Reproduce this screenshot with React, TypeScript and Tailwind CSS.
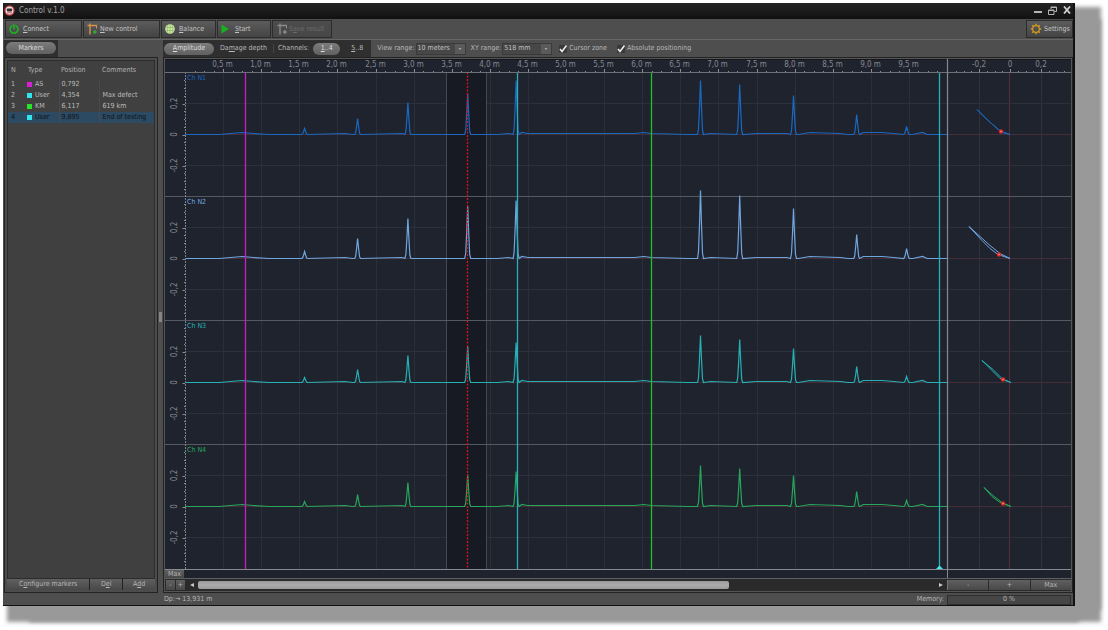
import { useLayoutEffect, useRef, useState } from 'react';
import type { ReactNode } from 'react';

const RULER = 13;
const AXIS = 20;
const XY_WIDTH = 124;
const UNIT = 155; // pixels per 1.0 of amplitude

const peakPositions = [1.57, 2.265, 2.925, 3.71, 4.345, 6.765, 7.28, 7.985, 8.815, 9.47];

const channels = [
  {
    name: 'Ch N1',
    color: '#1a68c0',
    peaks: [6, 16, 32, 41, 54, 54, 50, 39, 20, 8],
    loop: [[-33, 25], [-24, 16], [-12, 5], [-5, 2], [0, 0], [-8, 2], [-22, 14]],
    dot: [-9, 3],
  },
  {
    name: 'Ch N2',
    color: '#6fa6e0',
    peaks: [7, 20, 40, 52, 58, 68, 63, 50, 24, 10],
    loop: [[-41, 32], [-28, 18], [-20, 10], [-12, 4], [0, 0], [-10, 5], [-20, 13]],
    dot: [-11, 4],
  },
  {
    name: 'Ch N3',
    color: '#27b0b4',
    peaks: [5, 13, 27, 36, 40, 47, 43, 34, 16, 6],
    loop: [[-28, 22], [-18, 12], [-10, 4], [-5, 2], [1, 0], [-8, 4], [-17, 13]],
    dot: [-7, 3],
  },
  {
    name: 'Ch N4',
    color: '#27a65c',
    peaks: [5, 12, 24, 32, 35, 41, 38, 31, 15, 6],
    loop: [[-26, 19], [-18, 10], [-10, 4], [-5, 2], [1, 0], [-8, 4], [-17, 11]],
    dot: [-7, 3],
  },
];

const baseline = [
  [0, 0], [0.45, 0], [0.6, 1], [0.75, 2], [0.9, 1], [1.1, 0], [1.5, 0], [2.1, 1], [2.2, 0], [2.85, 1],
  [3, 0], [4.1, 0], [4.25, 1], [4.42, 2], [4.5, 1], [5.9, 1], [6.02, 2], [6.12, 1], [6.6, 0], [6.9, 1],
  [7.5, 1], [7.9, 1], [8.05, 0], [8.2, 2], [8.6, 1], [8.7, 0], [8.9, 2], [9.15, 2], [9.3, 1], [9.55, 0],
  [9.68, 2], [9.74, 0], [10, 0],
];

const markers = [
  { n: 1, type: 'AS', pos: 0.792, label: '0,792', comment: '', color: '#d41fd4', line: '#cc1cd2' },
  { n: 2, type: 'User', pos: 4.354, label: '4,354', comment: 'Max defect', color: '#2fe6ee', line: '#28b0b8' },
  { n: 3, type: 'KM', pos: 6.117, label: '6,117', comment: '619 km', color: '#27e627', line: '#20c026' },
  { n: 4, type: 'User', pos: 9.895, label: '9,895', comment: 'End of testing', color: '#2fe6ee', line: '#28b0b8' },
];

function tracePoints(peaks: number[], width: number, x0: number, y0: number) {
  const pts = baseline
    .filter(([m]) => !peakPositions.some((p) => Math.abs(p - m) < 0.05))
    .map(([m, h]) => [(m / 10) * width, h]);
  peakPositions.forEach((m, i) => {
    const x = (m / 10) * width;
    const h = peaks[i];
    pts.push([x - 3, 0], [x - 2, h * 0.1], [x - 1, h * 0.5], [x, h], [x + 1, h * 0.5], [x + 2, h * 0.08], [x + 3, 0]);
  });
  pts.sort((a, b) => a[0] - b[0]);
  return pts.map(([x, h]) => `${(x0 + x).toFixed(1)},${(y0 - h).toFixed(1)}`).join(' ');
}

function Chart() {
  const ref = useRef<HTMLDivElement>(null);
  const [size, setSize] = useState({ w: 906, h: 511 });

  useLayoutEffect(() => {
    const el = ref.current;
    if (!el) return;
    const update = () => setSize({ w: el.clientWidth, h: el.clientHeight });
    update();
    const observer = new ResizeObserver(update);
    observer.observe(el);
    return () => observer.disconnect();
  }, []);

  const { w, h } = size;
  const right = w - XY_WIDTH;
  const plotW = right - AXIS;
  const bottom = h - 0.5;
  const chH = (h - RULER - 1) / 4;
  const zeroXY = right + 63;
  const mx = (m: number) => Math.round(AXIS + (m / 10) * plotW) + 0.5;
  const top = (i: number) => Math.floor(RULER + i * chH) + 0.5;

  return (
    <div ref={ref} className="relative min-h-0 flex-1 overflow-hidden">
      <svg width={w} height={h} className="absolute inset-0 block bg-[#1f232e]" role="img" aria-label="Amplitude">
        {/* grid */}
        {Array.from({ length: 19 }, (_, i) => (i + 1) / 2).map((m) => (
          <line key={m} x1={mx(m)} x2={mx(m)} y1={RULER} y2={bottom} stroke="#2b2f3a" />
        ))}
        {[-62, -31, 31, 62].map((d) => (
          <line key={d} x1={zeroXY + d + 0.5} x2={zeroXY + d + 0.5} y1={RULER} y2={bottom} stroke={Math.abs(d) === 31 ? '#2f323c' : '#232732'} />
        ))}
        <line x1={zeroXY - 0.5} x2={zeroXY - 0.5} y1={RULER} y2={bottom} stroke="#4c303c" strokeWidth="1.2" />

        {channels.map((c, i) => {
          const zero = Math.round(top(i) + chH / 2) - 0.5;
          return (
            <g key={c.name}>
              {[0.2, -0.2].map((v) => (
                <line key={v} x1={AXIS} x2={w} y1={zero - v * UNIT} y2={zero - v * UNIT} stroke="#2c303b" />
              ))}
              <line x1={AXIS} x2={w} y1={zero} y2={zero} stroke="#452e38" />
            </g>
          );
        })}

        {/* cursor zone */}
        <rect x={mx(3.43)} y={RULER} width={mx(3.945) - mx(3.43)} height={h - RULER} fill="#171a22" />
        <line x1={mx(3.43)} x2={mx(3.43)} y1={RULER} y2={bottom} stroke="#464952" />
        <line x1={mx(3.945)} x2={mx(3.945)} y1={RULER} y2={bottom} stroke="#464952" />

        {channels.map((c, i) => {
          const y = top(i);
          const zero = Math.round(y + chH / 2) - 0.5;
          return (
            <g key={c.name}>
              <line x1={0} x2={w} y1={y} y2={y} stroke="#555962" />
              {Array.from({ length: 15 }, (_, k) => (k - 7) * 7.75).map((d) => (
                <line key={d} x1={d % 31 === 0 ? AXIS - 2.5 : AXIS - 1} x2={AXIS} y1={Math.round(zero + d) + 0.5} y2={Math.round(zero + d) + 0.5} stroke="#8a8d93" />
              ))}
              {[['0,2', -31], ['0', 0], ['-0,2', 31]].map(([t, d]) => (
                <text
                  key={t}
                  textAnchor="middle"
                  transform={`translate(12 ${zero + Number(d)}) rotate(-90)`}
                  fill="#85888f"
                  className="text-[8px]"
                >
                  {t}
                </text>
              ))}
              <text x={AXIS + 2} y={y + 7} fill={c.color} className="text-[7px]">{c.name}</text>
              <polyline points={tracePoints(c.peaks, plotW, AXIS, zero)} fill="none" stroke={c.color} strokeWidth="1.2" />
              <polygon
                points={c.loop.map(([x, v]) => `${zeroXY + x},${zero - v}`).join(' ')}
                fill="none"
                stroke={c.color}
                strokeWidth="1"
              />
              <circle cx={zeroXY + c.dot[0]} cy={zero - c.dot[1]} r="2.2" fill="#e02424" />
              <circle cx={zeroXY + c.dot[0]} cy={zero - c.dot[1]} r="0.8" fill="#ff9a8a" />
            </g>
          );
        })}

        <line x1={AXIS + 0.5} x2={AXIS + 0.5} y1={RULER} y2={bottom} stroke="#7c7f86" strokeDasharray="2 1" />
        <line x1={mx(3.695)} x2={mx(3.695)} y1={RULER} y2={bottom} stroke="#d8161e" strokeWidth="1.3" strokeDasharray="2 1.5" />
        {markers.map((m) => (
          <line key={m.n} x1={mx(m.pos)} x2={mx(m.pos)} y1={RULER} y2={bottom} stroke={m.line} strokeWidth="1.3" />
        ))}
        <path d={`M${mx(9.895) - 4} ${bottom} l2 -2 l2 -2 l2 2 l2 2 z`} fill="#3fe6f0" />

        {/* ruler */}
        <line x1={0} x2={w} y1={0.5} y2={0.5} stroke="#15171d" />
        {Array.from({ length: 79 }, (_, k) => (k + 1) / 8).map((m) => (
          <line key={m} x1={mx(m)} x2={mx(m)} y1={m % 0.5 === 0 ? RULER - 3 : RULER - 1} y2={RULER} stroke="#8a8d93" />
        ))}
        {Array.from({ length: 19 }, (_, i) => (i + 1) / 2).map((m) => (
          <text key={m} x={mx(m) - 1} y={8} textAnchor="middle" fill="#85888f" className="text-[8px]">
            {m.toFixed(1).replace('.', ',')} m
          </text>
        ))}
        {Array.from({ length: 15 }, (_, k) => k - 7).map((k) => (
          <line key={k} x1={Math.round(zeroXY + k * 7.75) + 0.5} x2={Math.round(zeroXY + k * 7.75) + 0.5} y1={k % 4 === 0 ? RULER - 3 : RULER - 1} y2={RULER} stroke="#8a8d93" />
        ))}
        {[['-0,2', -31], ['0', 0], ['0,2', 31]].map(([t, d]) => (
          <text key={t} x={zeroXY + Number(d)} y={8} textAnchor="middle" fill="#85888f" className="text-[8px]">{t}</text>
        ))}
        <line x1={0} x2={w} y1={RULER + 0.5} y2={RULER + 0.5} stroke="#6c6f76" />
        <line x1={0} x2={w} y1={bottom} y2={bottom} stroke="#85888f" strokeWidth="1.2" />
        <line x1={right + 0.5} x2={right + 0.5} y1={0} y2={h} stroke="#85888f" strokeWidth="1.2" />
      </svg>
    </div>
  );
}

const AppIcon = () => (
  <svg viewBox="0 0 11 11" className="size-[11px]">
    <circle cx="5.5" cy="5.5" r="5.2" fill="#b9383f" />
    <circle cx="5.5" cy="5.5" r="3.9" fill="#e9e3e3" />
    <rect x="2.8" y="3.4" width="5.4" height="3" rx="0.8" fill="#3c2b2e" />
    <path d="M3 7.8h5" stroke="#c4555b" />
  </svg>
);

const PowerIcon = () => (
  <svg viewBox="0 0 10 10" className="size-[10px]" fill="none" stroke="#19b81e" strokeWidth="1.5" strokeLinecap="round">
    <path d="M3 1.8a4 4 0 1 0 4 0M5 0.8v4" />
  </svg>
);

const ControlIcon = ({ color, plus }: { color: string; plus: string }) => (
  <svg viewBox="0 0 11 12" className="h-3 w-[11px]" fill="none" stroke={color} strokeWidth="1.4">
    <path d="M0.5 2.5h9.5M3 0.5v11" />
    <path d="M9.5 2.5v3" strokeWidth="1" />
    <path d="M5.8 9h4M7.8 7v4" stroke={plus} />
  </svg>
);

const GlobeIcon = () => (
  <svg viewBox="0 0 10 10" className="size-[10px]">
    <circle cx="5" cy="5" r="4.8" fill="#cdeaa6" />
    <path d="M1 3.5h8M1 6.5h8M5 0.5v9M3 1c-1 2.5-1 5.5 0 8M7 1c1 2.5 1 5.5 0 8" fill="none" stroke="#86ad62" strokeWidth="0.6" />
  </svg>
);

const PlayIcon = () => (
  <svg viewBox="0 0 8 10" className="h-[10px] w-2">
    <path d="M0.5 0.5L7.8 5L0.5 9.5z" fill="#16b41c" />
  </svg>
);

const GearIcon = () => (
  <svg viewBox="0 0 12 12" className="size-3" fill="none" stroke="#d39a1c">
    <circle cx="6" cy="6" r="3.3" strokeWidth="1.2" />
    <path d="M6 0.8v2M6 9.2v2M0.8 6h2M9.2 6h2M2.3 2.3l1.4 1.4M8.3 8.3l1.4 1.4M9.7 2.3l-1.4 1.4M3.7 8.3l-1.4 1.4" strokeWidth="1.5" />
  </svg>
);

function ToolButton({ icon, children, className, disabled }: { icon: ReactNode; children: ReactNode; className: string; disabled?: boolean }) {
  return (
    <button
      type="button"
      disabled={disabled}
      className={`flex h-[18px] items-center border border-[#2c2c2c] bg-linear-to-b from-[#5c5c5c] to-[#444444] text-[#c4c4c4] disabled:from-[#4c4c4c] disabled:to-[#474747] disabled:text-[#6c6c6c] ${className}`}
    >
      {icon}
      <span className="pt-px">{children}</span>
    </button>
  );
}

function SmallButton({ children, className }: { children: ReactNode; className: string }) {
  return (
    <button type="button" className={`flex items-center justify-center bg-linear-to-b from-[#606060] to-[#484848] text-[#b4b4b4] ${className}`}>
      {children}
    </button>
  );
}

function RangeSelect({ id, label, options }: { id: string; label: string; options: string[] }) {
  return (
    <div className="flex items-center">
      <label htmlFor={id}>{label}</label>
      <div className="relative ml-px flex h-3 w-[50px] border border-[#3a3a3a] bg-[#474747]">
        <select id={id} className="w-full appearance-none bg-transparent pl-px text-[#c0c0c0] outline-none">
          {options.map((o) => (
            <option key={o}>{o}</option>
          ))}
        </select>
        <span className="pointer-events-none absolute inset-y-0 right-0 flex w-[10px] items-center justify-center bg-[#5a5a5a]">
          <svg viewBox="0 0 4 2" className="h-[2px] w-1"><path d="M0.5 0h3L2 2z" fill="#a8a8a8" /></svg>
        </span>
      </div>
    </div>
  );
}

function CheckOption({ label }: { label: string }) {
  const [checked, setChecked] = useState(true);
  return (
    <label className="flex items-center gap-0.5">
      <span className="relative flex size-2">
        <input type="checkbox" checked={checked} onChange={(e) => setChecked(e.target.checked)} className="size-2 appearance-none bg-[#393939]" />
        {checked && (
          <svg viewBox="0 0 8 8" className="pointer-events-none absolute inset-0 size-2" fill="none" stroke="#ececec" strokeWidth="1.6">
            <path d="M1 4l2 2.5L7.5 0.5" />
          </svg>
        )}
      </span>
      {label}
    </label>
  );
}

function MarkersPanel() {
  return (
    <aside className="flex w-[154px] shrink-0 flex-col">
      <div className="flex h-[17px] items-start">
        <div className="flex h-[17px] w-[54px] justify-center bg-[#2f2f2f] pt-0.5">
          <button type="button" className="h-3 w-[50px] rounded-full bg-linear-to-b from-[#7c7c7c] to-[#606060] text-[#dcdcdc]">Markers</button>
        </div>
      </div>
      <div className="flex min-h-0 flex-1 flex-col border border-[#232323] bg-[#4c4c4c] p-0.5">
        <div className="min-h-0 flex-1 border border-[#2c2c2c] bg-[#404040]">
          <table className="w-full table-fixed border-collapse text-left">
            <thead className="h-[18px] text-[#b2b2b2]">
              <tr>
                <th className="w-[17px] pl-[3px] font-normal">N</th>
                <th className="w-[34px] pl-[3px] font-normal">Type</th>
                <th className="w-10 pl-0.5 font-normal">Position</th>
                <th className="pl-[3px] font-normal">Comments</th>
              </tr>
            </thead>
            <tbody className="text-[#bcbcbc]">
              {markers.map((m) => (
                <tr key={m.n} className={m.n === 4 ? 'h-[11px] bg-[#2c4a62] text-[#0e141a]' : 'h-[11px]'}>
                  <td className="pl-[3px]">{m.n}</td>
                  <td className="border-r border-[#4a4a4a] pl-0.5">
                    <span className="flex items-center gap-[3px]">
                      <i className="size-[5px]" style={{ backgroundColor: m.color }} />
                      {m.type}
                    </span>
                  </td>
                  <td className="border-r border-[#4a4a4a] pl-0.5">{m.label}</td>
                  <td className="pl-[3px] whitespace-nowrap">{m.comment}</td>
                </tr>
              ))}
            </tbody>
          </table>
        </div>
        <div className="flex h-[11px] gap-px bg-[#222222]">
          <SmallButton className="flex-[80]"><span>C<u>o</u>nfigure markers</span></SmallButton>
          <SmallButton className="flex-[31]"><span>D<u>e</u>l</span></SmallButton>
          <SmallButton className="flex-[31]"><span>A<u>d</u>d</span></SmallButton>
        </div>
      </div>
    </aside>
  );
}

export default function App() {
  return (
    <div className="h-screen bg-white pt-[3px] pr-[33px] pb-6 pl-[3px] font-['DejaVu_Sans_Condensed','DejaVu_Sans',sans-serif] text-[7px] leading-[9px]">
      <div className="flex h-full flex-col border-r-2 border-b border-[#111111] bg-[#4e4e4e] text-[#b8b8b8] shadow-[4px_16px_4px_#999999,26px_4px_4px_#999999,26px_16px_4px_#999999]">
        <header className="flex h-4 shrink-0 items-center bg-linear-to-b from-[#242424] to-[#111111] pb-0.5 pl-px">
          <AppIcon />
          <h1 className="ml-1 flex-1 text-[8px] text-[#a4a4a4]">Control v.1.0</h1>
          <div className="flex items-center gap-[6px] pr-0.5">
            <button type="button" aria-label="Minimize">
              <svg viewBox="0 0 8 8" className="size-2"><path d="M0 6h8" stroke="#b4b4b4" strokeWidth="2" /></svg>
            </button>
            <button type="button" aria-label="Restore">
              <svg viewBox="0 0 9 9" className="size-[9px]" fill="none" stroke="#b4b4b4">
                <path d="M3 3V1h5.5v4.5H6.5M3 1.5h5.5" />
                <path d="M0.5 4h5.5v4.5H0.5zM0.5 4.5h5.5" />
              </svg>
            </button>
            <button type="button" aria-label="Close">
              <svg viewBox="0 0 8 8" className="size-2"><path d="M1 0.5l6 7M7 0.5l-6 7" stroke="#d0d0d0" strokeWidth="1.8" /></svg>
            </button>
          </div>
        </header>

        <nav className="flex h-[21px] shrink-0 items-center gap-px border-b border-[#666666] pl-0.5">
          <ToolButton icon={<PowerIcon />} className="w-[77px] gap-1 pl-[3px]"><u>C</u>onnect</ToolButton>
          <ToolButton icon={<ControlIcon color="#d9924a" plus="#2fae3a" />} className="w-[77px] gap-0.5 pl-[3px]"><u>N</u>ew control</ToolButton>
          <ToolButton icon={<GlobeIcon />} className="w-[55px] gap-1 pl-[3px]"><u>B</u>alance</ToolButton>
          <ToolButton icon={<PlayIcon />} className="w-[54px] gap-[6px] pl-[3px]"><u>S</u>tart</ToolButton>
          <ToolButton disabled icon={<ControlIcon color="#8a8a8a" plus="#8a8a8a" />} className="w-[60px] gap-px pl-1">S<u>a</u>ve result</ToolButton>
          <ToolButton icon={<GearIcon />} className="ml-auto w-[47px] gap-0.5 pl-[3px]">Settings</ToolButton>
        </nav>

        <main className="flex min-h-0 flex-1">
          <div className="w-px shrink-0" />
          <MarkersPanel />
          <div className="flex w-[5px] shrink-0 flex-col items-center justify-center">
            <div className="h-[10px] w-[3px] bg-[#858585]" />
          </div>
          <section className="flex min-w-0 flex-1 flex-col">
            <div className="flex h-[17px] shrink-0 items-center">
              <div className="flex h-full items-center bg-[#2f2f2f] pr-2 pl-px">
                <button type="button" className="h-3 w-[50px] rounded-full bg-linear-to-b from-[#7c7c7c] to-[#606060] text-[#dcdcdc]"><u>A</u>mplitude</button>
                <button type="button" className="px-[6px]">Da<u>m</u>age depth</button>
                <span className="border-l border-[#444444] px-1">Channels:</span>
                <button type="button" className="h-3 w-[27px] rounded-full bg-linear-to-b from-[#7c7c7c] to-[#606060] text-[#dcdcdc]"><u>1</u>..4</button>
                <button type="button" className="pl-[11px]"><u>5</u>..8</button>
              </div>
              <div className="flex items-center gap-[5px] pl-[6px]">
                <RangeSelect id="view-range" label="View range:" options={['10 meters', '20 meters']} />
                <RangeSelect id="xy-range" label="XY range:" options={['518 mm', '1036 mm']} />
                <div className="flex items-center gap-[10px] pl-0.5">
                  <CheckOption label="Cursor zone" />
                  <CheckOption label="Absolute positioning" />
                </div>
              </div>
            </div>

            <div className="flex min-h-0 flex-1 flex-col border border-[#232323] bg-[#555555] p-px">
              <Chart />
              <div className="flex h-[9px] shrink-0 border-b border-[#5c5f66] bg-[#1f232e]">
                <SmallButton className="w-[19px]"><span>Max</span></SmallButton>
                <div className="flex-1" />
                <div className="w-[124px] border-l border-[#85888f]" />
              </div>
              <div className="flex h-3 shrink-0 items-center bg-[#2a2a2a]">
                <div className="flex gap-px px-px">
                  <SmallButton className="h-[10px] w-[9px]">-</SmallButton>
                  <SmallButton className="h-[10px] w-[9px]">+</SmallButton>
                </div>
                <button type="button" aria-label="Scroll left" className="flex h-3 w-3 items-center justify-center">
                  <svg viewBox="0 0 4 4" className="size-1"><path d="M4 0v4L0 2z" fill="#c8c8c8" /></svg>
                </button>
                <div className="flex h-2 flex-1">
                  <div className="w-[72%] rounded-xs bg-linear-to-b from-[#9a9a9a] via-[#acacac] to-[#9a9a9a]" />
                </div>
                <button type="button" aria-label="Scroll right" className="flex h-3 w-3 items-center justify-center">
                  <svg viewBox="0 0 4 4" className="size-1"><path d="M0 0v4l4-2z" fill="#c8c8c8" /></svg>
                </button>
                <div className="flex w-[124px] gap-px border-l border-[#777777]">
                  <SmallButton className="h-[10px] flex-1">-</SmallButton>
                  <SmallButton className="h-[10px] flex-1">+</SmallButton>
                  <SmallButton className="h-[10px] flex-1">Max</SmallButton>
                </div>
              </div>
            </div>
          </section>
        </main>

        <footer className="flex h-3 shrink-0 items-center pt-px pr-0.5 pl-[161px]">
          <span className="flex-1">Dp:→ 13,931 m</span>
          <span className="pr-[3px]">Memory:</span>
          <div className="flex h-[10px] w-[124px] items-center justify-center border border-[#2e2e2e] bg-[#464646]">0 %</div>
        </footer>
      </div>
    </div>
  );
}
